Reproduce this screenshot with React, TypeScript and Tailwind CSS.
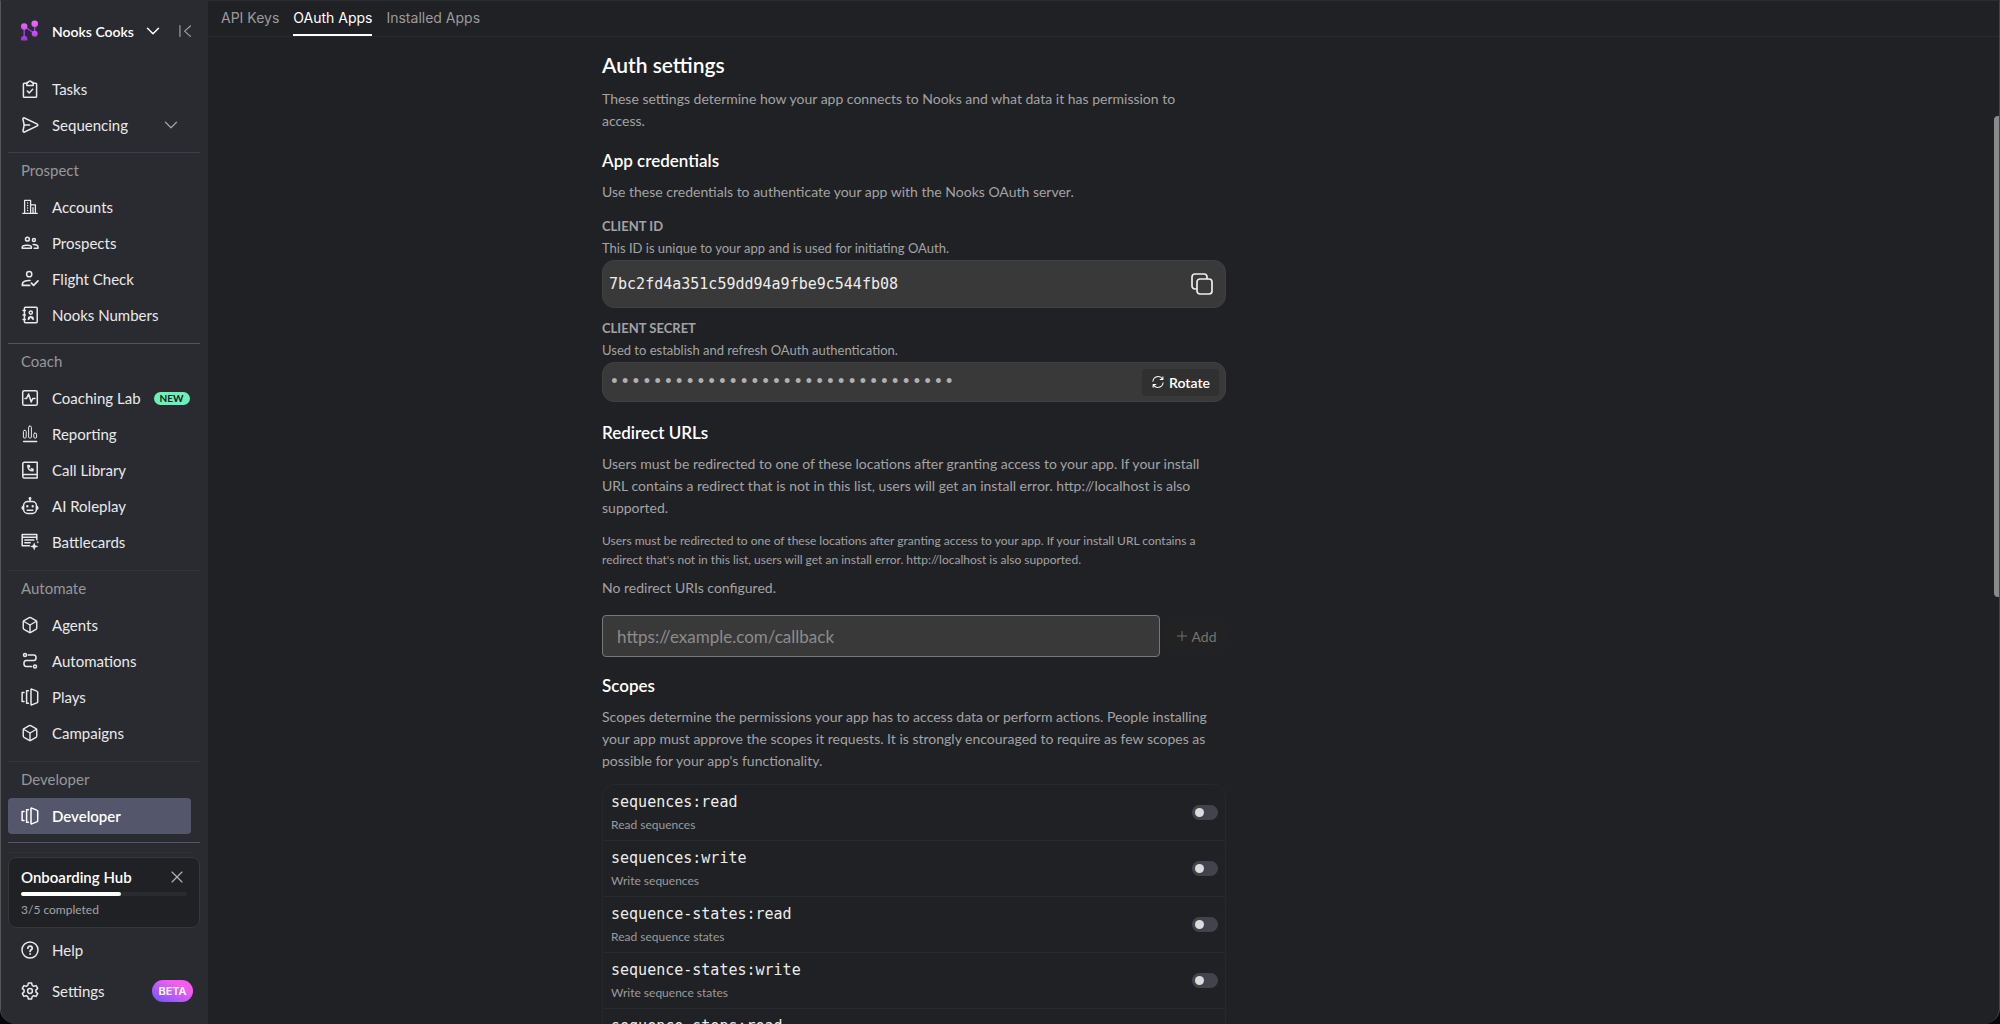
import React from 'react';
import { Box, ChevronDown, Plus, X } from 'lucide-react';
import { cva } from 'class-variance-authority';

type IconProps = { children: React.ReactNode; className?: string };

const Icon: React.FC<IconProps> = ({ children, className }) => (
  <svg
    viewBox="0 0 18 18"
    fill="none"
    stroke="currentColor"
    strokeWidth="1.5"
    strokeLinecap="round"
    strokeLinejoin="round"
    aria-hidden="true"
    className={className ?? 'w-[18px] h-[18px] shrink-0'}
  >
    {children}
  </svg>
);

const TasksIcon = () => (
  <Icon>
    <path d="M6 3.3H3.3a.9.9 0 0 0-.9.9v12.2c0 .5.4.9.9.9h11.4c.5 0 .9-.4.9-.9V4.2a.9.9 0 0 0-.9-.9H12" />
    <path d="M5.8 5.4V3c0-.4.3-.7.7-.7h.8a1.8 1.8 0 0 1 3.4 0h.8c.4 0 .7.3.7.7v2.4z" />
    <path d="m6.3 11 1.9 1.9 3.5-3.6" />
  </Icon>
);

const SendIcon = () => (
  <Icon>
    <path d="M1.9 3c0-.9.9-1.4 1.6-1l12.8 6.2c.7.4.7 1.3 0 1.6L3.5 16c-.7.4-1.6-.2-1.5-1L3.2 9z" />
    <path d="M3.2 9h5.5" />
  </Icon>
);

const AccountsIcon = () => (
  <Icon>
    <path d="M1.8 15.4h14.4M3.6 15.2V2.4h6v12.8M9.6 6.8h4.8v8.4M12 15V9.6" strokeWidth="1.3" />
    <path d="M6.6 5v.1M6.6 7.5v.1M6.6 10v.1M6.6 12.5v.1" />
  </Icon>
);

const ProspectsIcon = () => (
  <Icon>
    <circle cx="6.4" cy="5.2" r="1.9" />
    <circle cx="12.9" cy="6" r="1.5" />
    <path d="M1.2 14.2v-.9c0-2.4 8.4-2.9 9.2-.6v1.5zM12.2 10.6c2.2 0 4.8.7 4.8 2.5v1.1h-3.8" />
  </Icon>
);

const FlightIcon = () => (
  <Icon>
    <circle cx="8.2" cy="4.2" r="2.6" />
    <path d="M8.6 15.4H1.4v-1.5c0-2.2 3.4-3.6 7.6-3.4M10.4 13.2l2.2 2.2 4.4-4.6" strokeWidth="1.7" />
  </Icon>
);

const NumbersIcon = () => (
  <Icon>
    <rect x="3.4" y="1.2" width="12.8" height="15.6" rx="1" />
    <path d="M2 4.6h2.4M2 9h2.4M2 13.4h2.4M7.4 13.2c0-3.2 4.8-3.2 4.8 0M7.6 13.2l2.2-2.6 2.2 2.6" />
    <circle cx="9.8" cy="6.6" r="1.6" />
  </Icon>
);

const CoachingIcon = () => (
  <Icon>
    <rect x="1.7" y="1.7" width="14.6" height="14.6" rx="1.6" />
    <path d="M4 9.4h1.6l2-4.4 2.6 8 1.6-3.6H14" />
  </Icon>
);

const ReportingIcon = () => (
  <Icon>
    <g strokeWidth="1">
      <rect x="2.4" y="5.4" width="2.8" height="7.6" rx="1" />
      <rect x="7.6" y="1.2" width="2.8" height="11.8" rx="1" />
      <rect x="12.8" y="8.2" width="2.8" height="4.8" rx="1" />
    </g>
    <path d="M2.6 16.4h13" />
  </Icon>
);

const LibraryIcon = () => (
  <Icon>
    <path d="M16.2 13.6V1.2H3.4c-1 0-1.6.7-1.6 1.6v12.6c0 .9.7 1.5 1.6 1.5h12.8M16.2 13.6H3.4c-1 0-1.6.7-1.6 1.6M16.2 13.6v3.3" />
    <path d="M6.8 4.4c0 3.2 1.8 5.4 5.2 5.4V8.2l-1.6-.5M6.8 4.4h1.4l.4 1.6" />
  </Icon>
);

const RobotIcon = () => (
  <Icon>
    <rect x="2.6" y="4.6" width="12.8" height="11.8" rx="4" />
    <path d="M9 4.4V1.8M2.2 9.4c-1.4.4-1.4 2.6 0 3M15.8 9.4c1.4.4 1.4 2.6 0 3M6.2 13.2h5.6" />
    <path d="M6.3 9.2v.1M11.7 9.2v.1" strokeWidth="2.4" />
    <circle cx="9" cy="1.5" r=".7" fill="currentColor" />
  </Icon>
);

const BattlecardsIcon = () => (
  <Icon>
    <path d="M8.4 12.8H1.2V1.4h14.6v5.4M1.4 4.2h14.2M3.8 7h9M3.8 9.8h5.4" />
    <path d="m13.2 9.2 1.1 3.1 3.1 1.1-3.1 1.1-1.1 3.1-1.1-3.1L9 13.4l3.1-1.1z" fill="currentColor" stroke="none" />
    <path d="m16.8 7.6.4 1.2 1.2.4-1.2.4-.4 1.2-.4-1.2-1.2-.4 1.2-.4z" fill="currentColor" stroke="none" />
  </Icon>
);

const AutomationsIcon = () => (
  <Icon>
    <circle cx="4" cy="3" r="1.5" />
    <circle cx="14" cy="14.6" r="1.5" />
    <path d="M7.2 3h5.6c3 0 3 5.6 0 5.6H5.2c-3 0-3 6 0 6h5.4" />
  </Icon>
);

const PlaysIcon = () => (
  <Icon>
    <path d="M10 1.6v14.8c0 .4.3.6.7.5l5.1-2c.6-.2.9-.6.9-1.2V4.3c0-.6-.3-1-.9-1.2l-5.1-2c-.4-.1-.7.1-.7.5zM7.4 2.8H5.6v12.4h1.8M3 4.6H1.1v8.8H3" />
  </Icon>
);

const AgentsIcon = () => <Box size={18} strokeWidth={1.9} className="shrink-0" />;

const HelpIcon = () => (
  <Icon>
    <circle cx="9" cy="9" r="8" />
    <path d="M6.9 7.2c0-2.8 4.3-2.7 4.3 0 0 1.6-2.1 1.6-2.1 3.2M9.1 12.9v.1" strokeWidth="1.8" />
  </Icon>
);

const GearIcon = () => (
  <Icon>
    <path d="M7.4 1h3.2l.6 2.4 1.5.9 2.4-.7 1.6 2.8-1.8 1.7v1.8l1.8 1.7-1.6 2.8-2.4-.7-1.5.9-.6 2.4H7.4l-.6-2.4-1.5-.9-2.4.7-1.6-2.8 1.8-1.7V8.1L1.3 6.4l1.6-2.8 2.4.7 1.5-.9z" />
    <circle cx="9" cy="9" r="2.4" />
  </Icon>
);

const Logo = () => (
  <svg viewBox="0 0 20 22" aria-hidden="true" className="w-5 h-[22px] shrink-0">
    <defs>
      <linearGradient id="logo" x1="0" y1="0" x2="0" y2="22" gradientUnits="userSpaceOnUse">
        <stop offset="0" stopColor="#f06bfa" />
        <stop offset=".6" stopColor="#c94bf2" />
        <stop offset="1" stopColor="#8f2fd6" />
      </linearGradient>
    </defs>
    <g stroke="#a23be0" strokeWidth="1.5">
      <path d="M4.2 6.500v11.500M4.200 6.500l10.500 7M14.700 4v10" />
    </g>
    <g fill="url(#logo)">
      <circle cx="4.2" cy="6.5" r="3.2" />
      <circle cx="14.7" cy="3.7" r="3.3" />
      <circle cx="14.7" cy="13.8" r="3" />
      <path d="M1 20.5v-1.2a3.2 3.2 0 1 1 6.4 0v1.2z" />
    </g>
  </svg>
);

const navItem = cva('flex items-center gap-[13px] h-9 pl-[13px] mr-[9px] rounded text-[15px] whitespace-nowrap', {
  variants: {
    active: {
      true: 'bg-[#54576b] text-white font-semibold',
      false: 'text-[#e9e9eb]',
    },
  },
});

type NavItem = { icon: React.FC; label: string; badge?: string; active?: boolean };

const sections: { title: string; line: string; items: NavItem[] }[] = [
  {
    title: 'Prospect',
    line: 'border-[#3d3e4b]',
    items: [
      { icon: AccountsIcon, label: 'Accounts' },
      { icon: ProspectsIcon, label: 'Prospects' },
      { icon: FlightIcon, label: 'Flight Check' },
      { icon: NumbersIcon, label: 'Nooks Numbers' },
    ],
  },
  {
    title: 'Coach',
    line: 'border-[#54555b]',
    items: [
      { icon: CoachingIcon, label: 'Coaching Lab', badge: 'NEW' },
      { icon: ReportingIcon, label: 'Reporting' },
      { icon: LibraryIcon, label: 'Call Library' },
      { icon: RobotIcon, label: 'AI Roleplay' },
      { icon: BattlecardsIcon, label: 'Battlecards' },
    ],
  },
  {
    title: 'Automate',
    line: 'border-[#34353b]',
    items: [
      { icon: AgentsIcon, label: 'Agents' },
      { icon: AutomationsIcon, label: 'Automations' },
      { icon: PlaysIcon, label: 'Plays' },
      { icon: AgentsIcon, label: 'Campaigns' },
    ],
  },
  {
    title: 'Developer',
    line: 'border-[#34353f]',
    items: [{ icon: PlaysIcon, label: 'Developer', active: true }],
  },
];

const scopes = [
  { name: 'sequences:read', description: 'Read sequences' },
  { name: 'sequences:write', description: 'Write sequences' },
  { name: 'sequence-states:read', description: 'Read sequence states' },
  { name: 'sequence-states:write', description: 'Write sequence states' },
  { name: 'sequence-steps:read', description: 'Read sequence steps' },
];

const NavLink: React.FC<{ item: NavItem }> = ({ item }) => (
  <a href="#" className={navItem({ active: !!item.active })}>
    <item.icon />
    <span>{item.label}</span>
    {item.badge && (
      <span className="flex items-center h-[13px] px-1.5 rounded-full bg-[#6bf0b8] text-[10px] font-bold text-[#15201c]">
        {item.badge}
      </span>
    )}
  </a>
);

const Sidebar = () => (
  <aside className="flex flex-col w-[207px] shrink-0 px-2 pl-[7px] bg-[#2a2b30]">
    <div className="flex items-center h-[60px] pl-3 text-white">
      <Logo />
      <button className="flex items-center gap-2 ml-3 text-[14px] font-semibold whitespace-nowrap">
        Nooks Cooks
        <ChevronDown size={22} strokeWidth={1.6} />
      </button>
      <button aria-label="Collapse sidebar" className="ml-auto mr-2 text-[#a0a0a4]">
        <Icon className="w-3.5 h-3.5">
          <path d="M2.5 2v14M16 2.5 8.5 9.2l7.5 6.7" />
        </Icon>
      </button>
    </div>

    <nav>
      <div className="pt-2.5 pb-[9px]">
        <NavLink item={{ icon: TasksIcon, label: 'Tasks' }} />
        <button className="flex items-center gap-[13px] w-full h-9 pl-[13px] pr-[18px] text-[15px] text-[#e9e9eb]">
          <SendIcon />
          Sequencing
          <ChevronDown size={22} strokeWidth={1.4} className="ml-auto text-[#a0a0a4]" />
        </button>
      </div>
      {sections.map(section => (
        <div key={section.title} className={`border-t pb-2.5 last:pb-2 ${section.line}`}>
          <h2 className="flex items-center h-9 pl-[13px] pb-0.5 text-[15px] text-[#97979b]">{section.title}</h2>
          {section.items.map(item => (
            <NavLink key={item.label} item={item} />
          ))}
        </div>
      ))}
    </nav>

    <div className="border-t border-[#54566a] pt-[9px]">
      <div className="h-px mr-[9px] mb-1 bg-[#303136]" />
      <div className="px-3 h-[71px] rounded-lg border border-[#36373b] bg-[#202124]">
        <div className="flex items-center justify-between pt-1 h-[34px]">
          <span className="text-[15px] font-semibold text-white">Onboarding Hub</span>
          <button aria-label="Dismiss" className="text-[#b4b4b6]">
            <X size={20} strokeWidth={1.4} />
          </button>
        </div>
        <div className="h-1 rounded-full bg-[#2a2b2f]">
          <div className="w-3/5 h-full rounded-full bg-white" />
        </div>
        <p className="pt-1 text-[12px] leading-5 text-[#a4a4a7]">3/5 completed</p>
      </div>
      <a href="#" className="flex items-center gap-[13px] h-11 pl-[13px] text-[15px] text-[#e9e9eb]">
        <HelpIcon />
        Help
      </a>
      <a href="#" className="flex items-center gap-[13px] h-[38px] pl-[13px] pr-[7px] text-[15px] text-[#e9e9eb]">
        <GearIcon />
        Settings
        <span className="flex items-center justify-center w-[41px] h-[22px] ml-auto rounded-full bg-gradient-to-tr from-[#6a4dfa] to-[#f45cf0] to-70% font-['Inter',sans-serif] text-[11px] font-semibold text-white">
          BETA
        </span>
      </a>
    </div>
  </aside>
);

const Tabs = () => (
  <nav className="flex gap-3.5 h-9 shrink-0 px-[13px] border-b border-[#292a2d] font-['Inter',sans-serif] text-[14px] leading-[34px] text-[#9b9b9e]">
    <a href="#">API Keys</a>
    <a href="#" className="border-b-2 border-white text-white">OAuth Apps</a>
    <a href="#">Installed Apps</a>
  </nav>
);

const Text: React.FC<{ children: React.ReactNode }> = ({ children }) => (
  <p className="pr-2 text-[14px] leading-[22px] text-[#a3a3a5]">{children}</p>
);

const Heading: React.FC<{ children: React.ReactNode }> = ({ children }) => (
  <h2 className="mb-[9px] text-[17px] leading-[22px] font-semibold text-white">{children}</h2>
);

const AuthSettings = () => (
  <div className="max-w-[624px] ml-[22%] pt-3.5">
    <h1 className="mb-[9px] text-[21px] leading-7 font-semibold text-white">Auth settings</h1>
    <Text>These settings determine how your app connects to Nooks and what data it has permission to access.</Text>

    <section className="pt-[18px]">
      <Heading>App credentials</Heading>
      <Text>Use these credentials to authenticate your app with the Nooks OAuth server.</Text>

      <h3 className="pt-3 text-[13px] leading-[22px] font-bold text-[#a3a3a5]">CLIENT ID</h3>
      <p className="text-[13px] leading-[22px] text-[#a3a3a5]">This ID is unique to your app and is used for initiating OAuth.</p>
      <div className="flex items-center justify-between h-12 mt-px pl-[6px] pr-3 rounded-xl border border-[#404042] bg-[#393939]">
        <code className="font-['DejaVu_Sans_Mono',monospace] text-[15px] text-[#ededed]">7bc2fd4a351c59dd94a9fbe9c544fb08</code>
        <button aria-label="Copy client ID" className="text-[#ededed]">
          <svg viewBox="0 0 22 22" fill="none" stroke="currentColor" strokeWidth="1.7" strokeLinejoin="round" className="w-[22px] h-[22px]">
            <rect x="6" y="6" width="15" height="15" rx="3" />
            <path d="M6 16H4a3 3 0 0 1-3-3V4a3 3 0 0 1 3-3h9a3 3 0 0 1 3 3v2" />
          </svg>
        </button>
      </div>

      <h3 className="pt-[9px] text-[13px] leading-[22px] font-bold text-[#a3a3a5]">CLIENT SECRET</h3>
      <p className="text-[13px] leading-[22px] text-[#a3a3a5]">Used to establish and refresh OAuth authentication.</p>
      <div className="flex items-center justify-between h-10 mt-px px-[6px] rounded-xl border border-[#404042] bg-[#393939]">
        <span className="font-['Liberation_Mono',monospace] text-[18px] leading-none text-[#b0b0b0]">{'•'.repeat(32)}</span>
        <button className="flex items-center justify-center gap-1 w-[77px] h-[27px] rounded-sm bg-[#303030] text-[14px] font-semibold text-white">
          <Icon className="w-3.5 h-3.5">
            <path d="M2.5 8a6.6 6.6 0 0 1 12.4-2.5M15.5 10A6.6 6.6 0 0 1 3.1 12.5M15.3 2.2v3.5h-3.5M2.7 15.8v-3.5h3.5" strokeWidth="1.3" />
          </Icon>
          Rotate
        </button>
      </div>
    </section>

    <section className="pt-5">
      <Heading>Redirect URLs</Heading>
      <Text>
        Users must be redirected to one of these locations after granting access to your app. If your install URL
        contains a redirect that is not in this list, users will get an install error. http://localhost is also
        supported.
      </Text>
      <p className="pt-3 pb-2 text-[12px] leading-[19px] text-[#a3a3a5]">
        Users must be redirected to one of these locations after granting access to your app. If your install URL
        contains a redirect that's not in this list, users will get an install error. http://localhost is also
        supported.
      </p>
      <Text>No redirect URIs configured.</Text>
      <div className="flex items-center gap-1 pt-4">
        <input
          type="url"
          aria-label="Redirect URL"
          placeholder="https://example.com/callback"
          className="flex-1 h-[42px] px-3.5 rounded border border-[#77777a] bg-[#393939] text-[17px] text-white placeholder:text-[#8c8c8c]"
        />
        <button disabled className="flex items-center justify-center gap-0.5 w-[62px] h-[27px] rounded-sm bg-[#222223] text-[14px] text-[#747474]">
          <Plus size={16} strokeWidth={1.4} />
          Add
        </button>
      </div>
    </section>

    <section className="pt-[18px]">
      <Heading>Scopes</Heading>
      <Text>
        Scopes determine the permissions your app has to access data or perform actions. People installing your app must
        approve the scopes it requests. It is strongly encouraged to require as few scopes as possible for your app's
        functionality.
      </Text>
      <ul className="mt-3 rounded-xl border border-[#27282b]">
        {scopes.map(scope => (
          <li key={scope.name} className="h-14 border-b border-[#292a2f] last:border-b-0">
            <label className="flex items-center justify-between h-full pl-2 pr-[7px]">
              <span className="flex flex-col">
                <code className="font-['DejaVu_Sans_Mono',monospace] text-[15px] leading-6 text-[#ededed]">{scope.name}</code>
                <span className="text-[12px] leading-[22px] text-[#9b9b9e]">{scope.description}</span>
              </span>
              <input
                type="checkbox"
                role="switch"
                className="flex items-center appearance-none w-[26px] h-[15px] px-[3px] rounded-full bg-[#43434d] before:block before:w-[9px] before:h-[9px] before:rounded-full before:bg-[#dcdcdc] checked:justify-end"
              />
            </label>
          </li>
        ))}
      </ul>
    </section>
  </div>
);

export default function App() {
  return (
    <div className="h-screen bg-[#08080a] font-['Lato',sans-serif] antialiased">
      <div className="relative flex h-full overflow-hidden rounded-b-2xl border border-b-0 border-t-[#2b2c2f] border-r-[#45464a] border-l-[#55565a] bg-[#202124]">
        <Sidebar />
        <main className="flex flex-col flex-1 min-w-0">
          <Tabs />
          <div className="flex-1 min-h-0 overflow-hidden">
            <AuthSettings />
          </div>
        </main>
        {/* Scroll thumb */}
        <div className="absolute right-0 top-[115px] w-[5px] h-[47%] rounded-l-sm bg-[#8a8a8a]" />
      </div>
    </div>
  );
}
